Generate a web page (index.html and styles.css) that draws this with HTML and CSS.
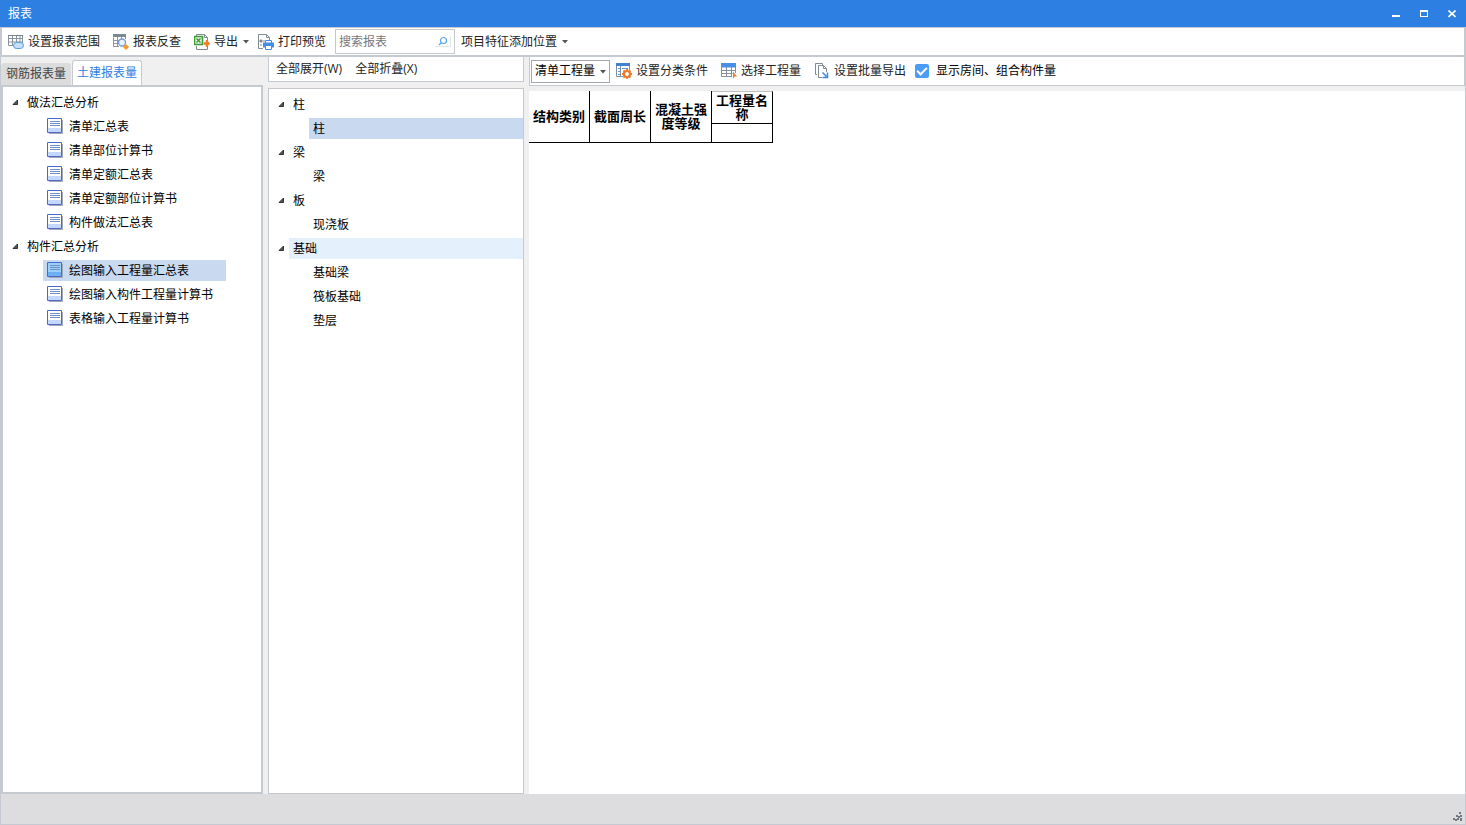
FILE: index.html
```html
<!DOCTYPE html>
<html lang="zh-CN">
<head>
<meta charset="utf-8">
<title>报表</title>
<link rel="stylesheet" href="styles.css">
</head>
<body>
<svg class="defs" aria-hidden="true">
  <symbol id="doc" viewBox="0 0 16 16">
    <path d="M2 15.500h13.500V2" fill="none" stroke="#a3a9b5"/>
    <path class="doc-page" d="M.5.5h14v14H.5z" stroke="#4a68c8"/>
    <path class="doc-foot" d="M1 10h13v4H1z"/>
    <path d="M3 3.500h10M3 5.500h10M3 7.500h10" stroke="#6f8fc8"/>
  </symbol>
  <symbol id="twist" viewBox="0 0 7 7"><path d="M5.500 1v4.500H1z" fill="#555" stroke="#333"/></symbol>
  <symbol id="caret" viewBox="0 0 6 4"><path d="M0 0h6L3 3.5z" fill="#555"/></symbol>
</svg>
<div class="app">
  <header class="titlebar">
    <h1 class="title">报表</h1>
    <div class="winbtns">
      <button class="winbtn" aria-label="最小化"><svg width="8" height="8" viewBox="0 0 8 8"><path d="M0 5h8v2H0z" fill="#fff"/></svg></button>
      <button class="winbtn" aria-label="最大化"><svg width="8" height="8" viewBox="0 0 8 8"><path d="M0 0h8v7H0zM1 2v4h6V2z" fill="#fff" fill-rule="evenodd"/></svg></button>
      <button class="winbtn" aria-label="关闭"><svg width="8" height="8" viewBox="0 0 8 8"><path d="M.5.5l7 6.5M7.500.5L.5 7" stroke="#fff" stroke-width="1.6"/></svg></button>
    </div>
  </header>

  <div class="toolbar main-tools">
    <button class="tool"><svg width="16" height="16" viewBox="0 0 16 16"><path d="M.5 1.500h14v10H.5zM.5 4.500h14M.5 8h14M4.500 1.500v10M8.500 1.500v10M12 1.500v7" fill="none" stroke="#87929d"/><path d="M0 1h15v1H0z" fill="#76828e"/><rect x="5.500" y="8.500" width="10" height="6" rx="3" fill="#c2e0fb" stroke="#5b9ce0"/></svg>设置报表范围</button>
    <button class="tool"><svg width="16" height="16" viewBox="0 0 16 16"><path d="M.5 3.500v9H6M.5 6.500h6M.5 9.500h5M4.500 3v10M8.500 3v2M12.500 3v2" fill="none" stroke="#8a95a0"/><path d="M0 0h13v3H0z" fill="#7c8894"/><circle cx="9" cy="8.500" r="3.500" fill="#e9f3ff" stroke="#7697d8" stroke-width="1.300"/><path d="M13 10l3 3-3 3-3-3z" fill="#f59a23"/></svg>报表反查</button>
    <button class="tool drop"><svg width="16" height="16" viewBox="0 0 16 16"><path d="M2.500 2V.5h8l3 3V7M2.500 12v3.500h11V12M10.500.5v3h3" fill="none" stroke="#808b96"/><path d="M.5 2.500h8v8h-8z" fill="#e6f4e2" stroke="#3f9636" stroke-width="1.600"/><path d="M2.500 4.500l4 4M6.500 4.500l-4 4" stroke="#3f9636" stroke-width="1.400"/><path d="M10 8.500h2V6l4 3.500-4 3.500v-2.500h-2z" fill="#f47b25" stroke="#f47b25" stroke-width=".6"/></svg>导出<svg class="caret" width="6" height="4"><use href="#caret"/></svg></button>
    <button class="tool"><svg width="16" height="16" viewBox="0 0 16 16"><path d="M5 14.500H.5V.5h8l3 3V6M8.500.5v3h3" fill="none" stroke="#808b96"/><path d="M2 6h2v2H2zM5 7h2M2 11h2" stroke="#808b96" fill="#808b96"/><path d="M5 8.500h11v5H5z" fill="#448ee4"/><path d="M7.500 6.500h6v2.500h-6zM7.500 11.500h6v4h-6z" fill="#fff" stroke="#448ee4"/></svg>打印预览</button>
    <label class="search"><input class="search-input" type="text" placeholder="搜索报表" aria-label="搜索报表"><svg class="search-icon" width="16" height="11" viewBox="0 0 16 11"><path d="M0 10.500h15.500V0" fill="none" stroke="#e2e8ee"/><circle cx="8.500" cy="4.500" r="3" fill="none" stroke="#58a6ec" stroke-width="1.200"/><path d="M6.300 6.700L4 9" stroke="#58a6ec" stroke-width="1.400"/></svg></label>
    <button class="tool drop">项目特征添加位置<svg class="caret" width="6" height="4"><use href="#caret"/></svg></button>
  </div>

  <main class="body">
    <section class="col reports">
      <div class="tabs" role="tablist">
        <button class="tab" role="tab" aria-selected="false">钢筋报表量</button>
        <button class="tab active" role="tab" aria-selected="true">土建报表量</button>
      </div>
      <div class="pane report-pane">
        <ul class="tree">
          <li class="row group"><svg class="twist"><use href="#twist"/></svg><span class="cell">做法汇总分析</span></li>
          <li class="row leaf"><span class="cell"><svg class="doc"><use href="#doc"/></svg>清单汇总表</span></li>
          <li class="row leaf"><span class="cell"><svg class="doc"><use href="#doc"/></svg>清单部位计算书</span></li>
          <li class="row leaf"><span class="cell"><svg class="doc"><use href="#doc"/></svg>清单定额汇总表</span></li>
          <li class="row leaf"><span class="cell"><svg class="doc"><use href="#doc"/></svg>清单定额部位计算书</span></li>
          <li class="row leaf"><span class="cell"><svg class="doc"><use href="#doc"/></svg>构件做法汇总表</span></li>
          <li class="row group"><svg class="twist"><use href="#twist"/></svg><span class="cell">构件汇总分析</span></li>
          <li class="row leaf selected"><span class="cell"><svg class="doc"><use href="#doc"/></svg>绘图输入工程量汇总表</span></li>
          <li class="row leaf"><span class="cell"><svg class="doc"><use href="#doc"/></svg>绘图输入构件工程量计算书</span></li>
          <li class="row leaf"><span class="cell"><svg class="doc"><use href="#doc"/></svg>表格输入工程量计算书</span></li>
        </ul>
      </div>
    </section>

    <section class="col parts">
      <div class="toolbar part-tools">
        <button class="tool">全部展开(W)</button>
        <button class="tool">全部折叠(X)</button>
      </div>
      <div class="pane part-pane">
        <ul class="tree">
          <li class="row group"><svg class="twist"><use href="#twist"/></svg><span class="cell">柱</span></li>
          <li class="row leaf selected"><span class="cell">柱</span></li>
          <li class="row group"><svg class="twist"><use href="#twist"/></svg><span class="cell">梁</span></li>
          <li class="row leaf"><span class="cell">梁</span></li>
          <li class="row group"><svg class="twist"><use href="#twist"/></svg><span class="cell">板</span></li>
          <li class="row leaf"><span class="cell">现浇板</span></li>
          <li class="row group hover"><svg class="twist"><use href="#twist"/></svg><span class="cell">基础</span></li>
          <li class="row leaf"><span class="cell">基础梁</span></li>
          <li class="row leaf"><span class="cell">筏板基础</span></li>
          <li class="row leaf"><span class="cell">垫层</span></li>
        </ul>
      </div>
    </section>

    <section class="col result">
      <div class="toolbar result-tools">
        <div class="picker"><select class="select" aria-label="工程量类型"><option>清单工程量</option></select><svg class="picker-caret" width="6" height="4"><use href="#caret"/></svg></div>
        <button class="tool"><svg width="16" height="16" viewBox="0 0 16 16"><path d="M.5 1v12.500H7M13.500 3v4M4.500 3v10" fill="none" stroke="#7b8fa8"/><path d="M0 0h14v3H0z" fill="#3f82d0"/><path d="M2 5.500h2M2 8.500h2M2 11.500h2M6 5.500h6" stroke="#5b9ce0"/><circle cx="11" cy="11" r="3" fill="#fff" stroke="#f07a28" stroke-width="2.200"/><path d="M11 6v2M11 14v2M6 11h2M14 11h2M7.500 7.500L9 9M13 13l1.500 1.500M14.500 7.500L13 9M7.500 14.500L9 13" stroke="#f07a28" stroke-width="1.800"/></svg>设置分类条件</button>
        <button class="tool"><svg width="16" height="16" viewBox="0 0 16 16"><path d="M.5 4v9.500H11M.5 7.500h14M.5 10.500h11M5.500 4v10M10.500 4v10M14.500 4v6" fill="none" stroke="#84909c"/><path d="M0 0h15v4.500H0z" fill="#4a90e2"/><path d="M12 8.500v7l1.500-2H16z" fill="#f07a28"/></svg>选择工程量</button>
        <button class="tool"><svg width="16" height="16" viewBox="0 0 16 16"><path d="M3 11.500H1.500V.5h7V2" fill="none" stroke="#808b96"/><path d="M8 14.500H4.500v-12h5l3 3V9M9.500 2.500v3h3" fill="none" stroke="#808b96"/><path d="M8.500 9.500l4 4M13.500 9.500v5h-5" fill="none" stroke="#3f88dc" stroke-width="1.500"/></svg>设置批量导出</button>
        <label class="check"><input class="check-box" type="checkbox" checked>显示房间、组合构件量</label>
      </div>
      <div class="sheet">
        <table class="grid">
          <colgroup><col class="grid-col"><col class="grid-col"><col class="grid-col"><col class="grid-col"></colgroup>
          <tr class="grid-head"><th rowspan="2">结构类别</th><th rowspan="2">截面周长</th><th rowspan="2">混凝土强度等级</th><th class="quantity">工程量名称</th></tr>
          <tr class="grid-sub"><th></th></tr>
        </table>
      </div>
    </section>
  </main>

  <footer class="status"><svg width="9" height="9" viewBox="0 0 9 9"><path d="M6 0h2v2H6zM7 3h2v2H7zM3 3h2v2H3zM5 4h2v2H5zM0 6h2v2H0zM2 7h2v2H2zM4 6h2v2H4zM7 6h2v3H7z" fill="#6f7883"/></svg></footer>
</div>
</body>
</html>
```
FILE: styles.css
```css
* { box-sizing: border-box; }

body {
  margin: 0;
  font: 12px/18px "Open Sans", "Noto Sans CJK SC", sans-serif;
  color: #000;
}

button, input, select { font: inherit; color: inherit; }

button { border: 0; padding: 0; background: none; }

svg { flex: none; display: block; }

.defs { position: absolute; width: 0; height: 0; }

.app {
  display: flex;
  flex-direction: column;
  height: 100vh;
  background: #f0f0f0;
  border: solid #c5cad2;
  border-width: 0 1px 1px;
}

.titlebar {
  display: flex;
  align-items: center;
  justify-content: space-between;
  height: 27px;
  margin: 0 -1px;
  padding: 0 10px 0 8px;
  background: #2d80e2;
  color: #fff;
}

.title { margin: 0; font-size: 12px; font-weight: 400; }

.winbtns { display: flex; gap: 20px; }

.toolbar {
  display: flex;
  align-items: center;
  gap: 2px;
  background: #fff;
  border: 1px solid #c5cad0;
}

.main-tools { height: 30px; border-bottom-width: 2px; padding: 0 2px; }

.tool {
  display: flex;
  align-items: center;
  gap: 4px;
  height: 22px;
  padding: 0 7px 0 4px;
  color: #222;
  white-space: nowrap;
}

.drop { padding-right: 3px; }

.caret { margin-left: 1px; }

.search {
  display: flex;
  align-items: center;
  width: 120px;
  height: 25px;
  padding: 0 3px;
  border: 1px solid #c5c8cc;
}

.search-input {
  flex: 1;
  min-width: 0;
  padding: 0;
  border: 0;
  outline: 0;
  background: none;
}

.search-input::placeholder { color: #777; opacity: 1; }

.body {
  flex: 1;
  min-height: 0;
  display: grid;
  grid-template-columns: 262px 256px minmax(0, 1fr);
  gap: 5px;
}

.col { display: flex; flex-direction: column; min-width: 0; }

.tabs { display: flex; align-items: flex-end; height: 28px; }

.tab {
  width: 70px;
  height: 22px;
  background: #dcdcdc;
  border-radius: 3px 3px 0 0;
  color: #444;
}

.tab.active {
  height: 25px;
  margin-left: 1px;
  background: #fff;
  border: 1px solid #c5cad0;
  border-bottom: 0;
  color: #2d80e2;
}

.pane { flex: 1; background: #fff; border: 1px solid #c5c8cc; }

.report-pane { border: 2px solid #c5cad0; padding: 5px 0 0 9px; }

.part-pane { margin-top: 6px; padding: 5px 0 0 9px; }

.tree {
  display: flex;
  flex-direction: column;
  gap: 3px;
  margin: 0;
  padding: 0;
  list-style: none;
}

.row { display: flex; align-items: center; height: 21px; }

.twist { width: 7px; height: 7px; }

.cell { display: flex; align-items: center; height: 21px; padding-left: 4px; }

.group .cell { margin-left: 4px; }

.report-pane .leaf { padding-left: 31px; }

.report-pane .leaf .cell { min-width: 183px; gap: 6px; }

.part-pane .leaf { padding-left: 31px; }

.part-pane .cell { flex: 1; }

.selected .cell { background: #c9d9ef; }

.hover .cell { background: #e4f1fd; }

.doc {
  width: 16px;
  height: 16px;
  margin-bottom: 1px;
  fill: #fff;
  --foot: #c4d8ff;
}

.doc-page { fill: inherit; }

.doc-foot { fill: var(--foot); }

.selected .doc { fill: #9ad0fa; --foot: #6eb0f4; }

.part-tools { height: 25px; padding: 0 3px; border-top: 0; }

.result-tools { height: 29px; padding: 0 1px; border-top: 0; }

.picker { position: relative; width: 79px; height: 23px; }

.select {
  display: block;
  width: 100%;
  height: 100%;
  padding: 0 3px;
  border: 1px solid #a5a9ae;
  border-radius: 0;
  background: #fff;
  appearance: none;
}

.picker-caret { position: absolute; right: 4px; top: 10px; pointer-events: none; }

.check { display: flex; align-items: center; gap: 7px; white-space: nowrap; }

.check-box {
  appearance: none;
  width: 14px;
  height: 14px;
  margin: 0;
  border-radius: 2px;
  background: #4b9cf5;
  display: grid;
  place-items: center;
}

.check-box:checked::before {
  content: "";
  width: 8px;
  height: 4px;
  margin-bottom: 2px;
  border: solid #fff;
  border-width: 0 0 2px 2px;
  rotate: -45deg;
}

.sheet { flex: 1; margin-top: 5px; background: #fff; }

.grid {
  table-layout: fixed;
  width: 244px;
  border-collapse: separate;
  border-spacing: 0;
  font: 700 13px/14px "Noto Sans CJK SC", sans-serif;
}

.grid-col { width: 61px; }

.grid th {
  padding: 0 3px 1px;
  border: solid #000;
  border-width: 0 1px 1px 0;
  text-align: center;
}

.grid .quantity { border-top: 1px solid #c0c0c0; }

.grid-head { height: 33px; }

.grid-sub { height: 19px; }

.status {
  display: flex;
  align-items: flex-end;
  justify-content: flex-end;
  height: 30px;
  padding: 3px;
  background: #dddddf;
}
```
